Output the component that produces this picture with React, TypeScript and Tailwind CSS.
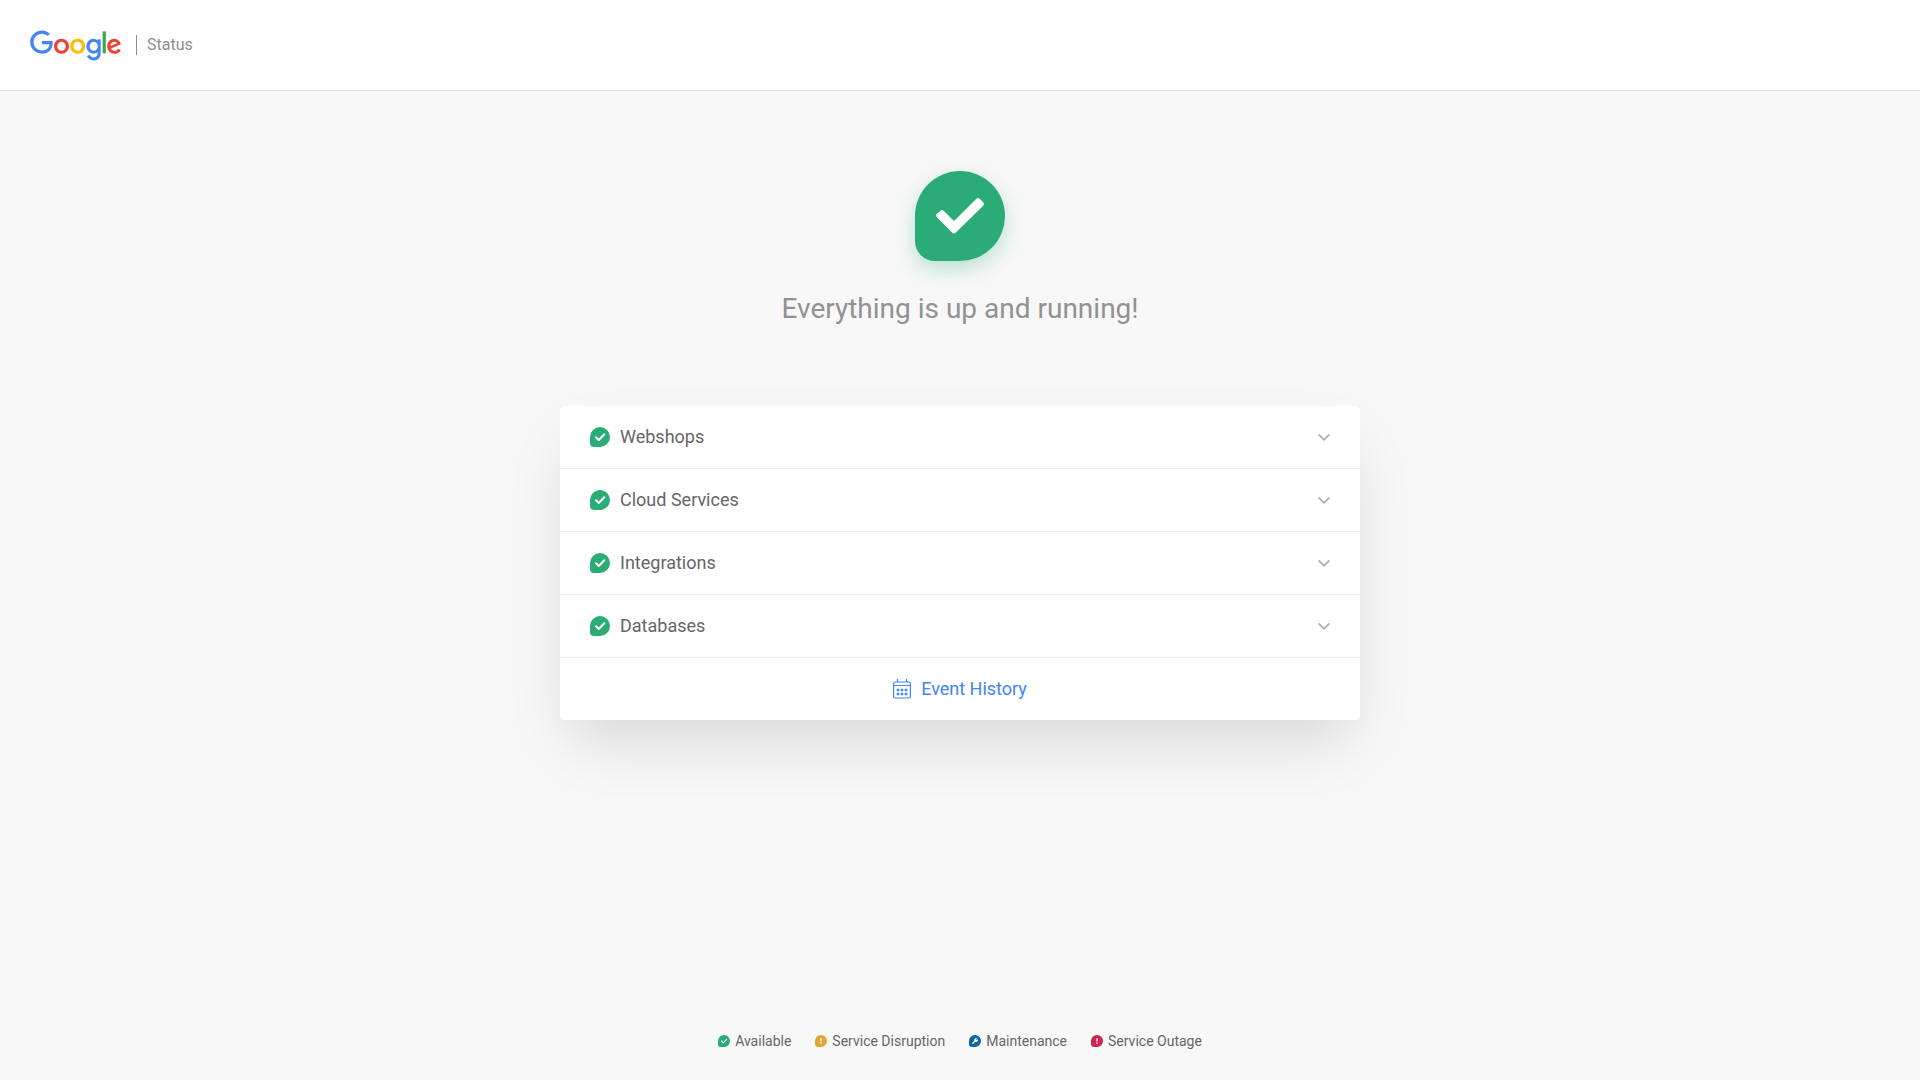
import type { ReactNode } from "react";

const services = ["Webshops", "Cloud Services", "Integrations", "Databases"];

function HeroCheck() {
  return (
    <svg viewBox="0 0 90 90" className="size-full" aria-hidden="true">
      <path
        d="M27 42 39 54 63 30 66 33 39 59.500 24 44.500Z"
        fill="currentColor"
        stroke="currentColor"
        strokeWidth="5.500"
        strokeLinejoin="round"
      />
    </svg>
  );
}

function SmallCheck() {
  return (
    <svg viewBox="0 0 20 20" className="size-full" aria-hidden="true">
      <path
        d="M6 10.300 8.800 13 14.300 7.300"
        fill="none"
        stroke="currentColor"
        strokeWidth="2"
        strokeLinecap="round"
        strokeLinejoin="round"
      />
    </svg>
  );
}

function Exclamation() {
  return (
    <svg viewBox="0 0 12 12" className="size-full" aria-hidden="true">
      <path d="M5.200 3.300h1.600l-.2 3.200H5.400z" fill="currentColor" />
      <circle cx="6" cy="8.100" r=".8" fill="currentColor" />
    </svg>
  );
}

function Wrench() {
  return (
    <svg viewBox="0 0 12 12" className="size-full" aria-hidden="true">
      <path d="M3.800 8.300 6.800 5.300" stroke="currentColor" strokeWidth="1.300" strokeLinecap="round" />
      <path
        d="M8.200 3.200 7.100 4.300l.1.700.7.100L9 4a2 2 0 0 1-2.600 2.600L5.500 5.700A2 2 0 0 1 8.200 3.200Z"
        fill="currentColor"
      />
    </svg>
  );
}

function GoogleLogo() {
  return (
    <svg viewBox="0 0 270 90" className="h-[31px] w-[91px]" role="img" aria-label="Google">
      <path fill="#EA4335" d="M115.75 47.18c0 12.77-9.99 22.18-22.25 22.18s-22.25-9.41-22.25-22.18C71.25 34.32 81.24 25 93.5 25s22.25 9.32 22.25 22.18zm-9.74 0c0-7.98-5.79-13.44-12.51-13.44S80.99 39.2 80.99 47.18c0 7.9 5.79 13.44 12.51 13.44s12.51-5.55 12.51-13.44z" />
      <path fill="#FBBC05" d="M163.75 47.18c0 12.77-9.99 22.18-22.25 22.18s-22.25-9.41-22.25-22.18c0-12.85 9.99-22.18 22.25-22.18s22.25 9.32 22.25 22.18zm-9.74 0c0-7.98-5.79-13.44-12.51-13.44s-12.51 5.46-12.51 13.44c0 7.9 5.79 13.44 12.51 13.44s12.51-5.55 12.51-13.44z" />
      <path fill="#4285F4" d="M209.75 26.34v39.82c0 16.38-9.66 23.07-21.08 23.07-10.75 0-17.22-7.19-19.66-13.07l8.48-3.53c1.51 3.61 5.21 7.87 11.17 7.87 7.31 0 11.84-4.51 11.84-13v-3.19h-.34c-2.18 2.69-6.38 5.04-11.68 5.04-11.09 0-21.25-9.66-21.25-22.09 0-12.52 10.16-22.26 21.25-22.26 5.29 0 9.49 2.35 11.68 4.96h.34v-3.61h9.25zm-8.56 20.92c0-7.81-5.21-13.52-11.84-13.52-6.72 0-12.35 5.71-12.35 13.52 0 7.73 5.63 13.36 12.35 13.36 6.63 0 11.84-5.63 11.84-13.36z" />
      <path fill="#34A853" d="M225 3v65h-9.5V3h9.5z" />
      <path fill="#EA4335" d="M262.02 54.48l7.56 5.04c-2.44 3.61-8.32 9.83-18.48 9.83-12.6 0-22.01-9.74-22.01-22.18 0-13.19 9.49-22.18 20.92-22.18 11.51 0 17.14 9.16 18.98 14.11l1.01 2.52-29.65 12.28c2.27 4.45 5.8 6.72 10.75 6.72 4.96 0 8.4-2.44 10.92-6.14zm-23.27-7.98l19.82-8.23c-1.09-2.77-4.37-4.7-8.23-4.7-4.95 0-11.84 4.37-11.59 12.93z" />
      <path fill="#4285F4" d="M35.29 41.41V32H67c.31 1.64.47 3.58.47 5.68 0 7.06-1.93 15.79-8.15 22.01-6.05 6.3-13.78 9.66-24.02 9.66C16.32 69.35.36 53.89.36 34.91.36 15.93 16.32.47 35.3.47c10.5 0 17.98 4.12 23.6 9.49l-6.64 6.64c-4.03-3.78-9.49-6.72-16.97-6.72-13.86 0-24.7 11.17-24.7 25.03 0 13.86 10.84 25.03 24.7 25.03 8.99 0 14.11-3.61 17.39-6.89 2.66-2.66 4.41-6.46 5.1-11.65l-22.49.01z" />
    </svg>
  );
}

function CalendarIcon() {
  return (
    <svg viewBox="0 0 18 20" className="h-5 w-[18px]" fill="none" stroke="currentColor" aria-hidden="true">
      <rect x=".6" y="3" width="16.800" height="16" rx="1.500" strokeWidth="1.200" />
      <path d="M.6 6.500h16.800M4.500 0v3M13.500 0v3" strokeWidth="1.200" />
      <path d="M3.700 11h10.600M3.700 15h10.600" strokeWidth="2.400" strokeDasharray="2.600 1.400" />
    </svg>
  );
}

function LegendItem({ color, label, children }: { color: string; label: string; children: ReactNode }) {
  return (
    <li className="flex items-center gap-[5px]">
      <span className={`size-3 rounded-[50%] rounded-bl-[3px] text-white ${color}`}>{children}</span>
      {label}
    </li>
  );
}

export default function App() {
  return (
    <div className="flex min-h-screen flex-col bg-[#f8f8f8] font-[Roboto,'Liberation_Sans',sans-serif] text-[#666]">
      <header className="flex h-[91px] items-center border-b border-[#e8e8e8] bg-white px-[30px]">
        <a href="#" aria-label="Google Status home">
          <GoogleLogo />
        </a>
        <span className="ml-[15px] border-l border-[#8e8e8e] pl-2.5 text-base leading-5 text-[#8e8e8e]">Status</span>
      </header>

      <main className="flex flex-1 flex-col items-center px-5 pt-20">
        <div className="size-[90px] rounded-[50%] rounded-bl-[20px] bg-[#2bac76] text-white shadow-[0_8px_20px_rgba(43,172,118,0.3)]">
          <HeroCheck />
        </div>
        <h1 className="mt-7 text-[28px] leading-10 text-[#929292]">Everything is up and running!</h1>

        <section className="mt-[77px] w-full max-w-[800px] rounded-[5px] bg-white shadow-[0_30px_60px_-12px_rgba(0,0,0,0.14)]">
          {services.map((name) => (
            <button
              key={name}
              type="button"
              aria-expanded="false"
              className="flex h-[63px] w-full items-center border-b border-[#efefef] px-[30px] text-left text-lg"
            >
              <span className="mr-2.5 size-5 rounded-[50%] rounded-bl-[4px] bg-[#2bac76] text-white">
                <SmallCheck />
              </span>
              {name}
              <svg
                viewBox="0 0 12 8"
                className="ml-auto h-2 w-3"
                fill="none"
                stroke="#adadad"
                strokeWidth="1.700"
                aria-hidden="true"
              >
                <path d="M.6 1.300 6 6.800 11.400 1.300" />
              </svg>
            </button>
          ))}
          <a href="#history" className="flex h-[62px] items-center justify-center gap-2.5 text-lg text-[#4285f4]">
            <CalendarIcon />
            Event History
          </a>
        </section>
      </main>

      <footer className="px-5 pb-[27px]">
        <ul className="flex flex-wrap justify-center gap-x-6 gap-y-2 text-sm leading-6">
          <LegendItem color="bg-[#2bac76]" label="Available">
            <SmallCheck />
          </LegendItem>
          <LegendItem color="bg-[#e0a735]" label="Service Disruption">
            <Exclamation />
          </LegendItem>
          <LegendItem color="bg-[#1264a3]" label="Maintenance">
            <Wrench />
          </LegendItem>
          <LegendItem color="bg-[#d02351]" label="Service Outage">
            <Exclamation />
          </LegendItem>
        </ul>
      </footer>
    </div>
  );
}
